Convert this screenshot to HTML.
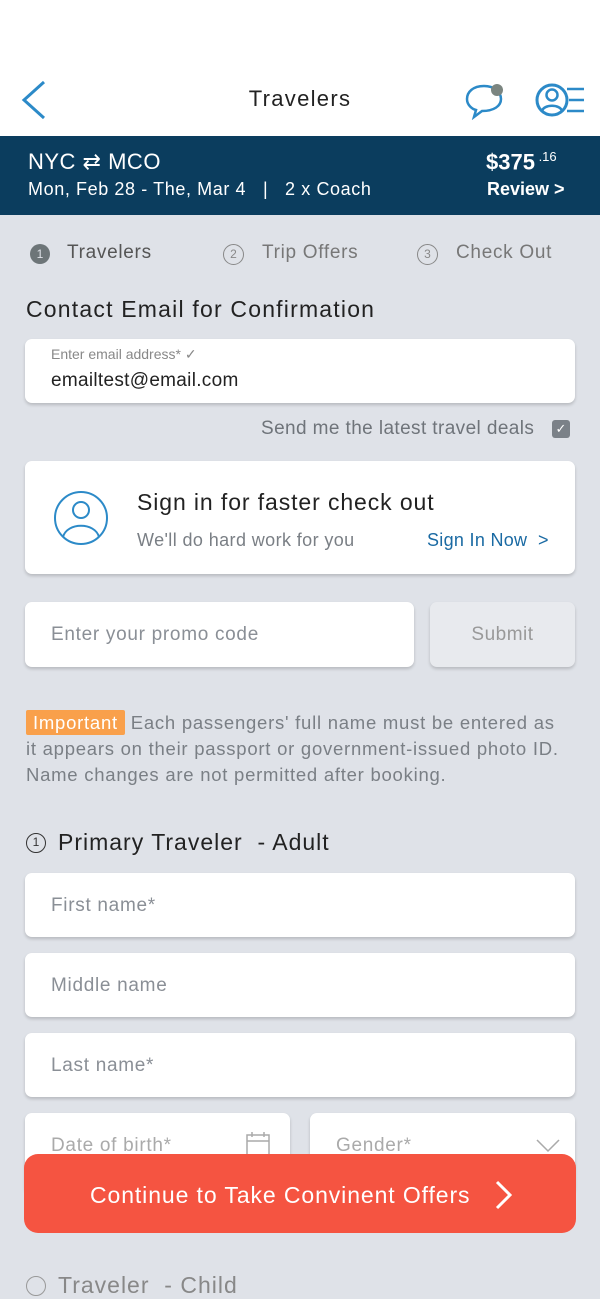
<!DOCTYPE html>
<html><head><meta charset="utf-8"><style>
*{box-sizing:border-box;margin:0;padding:0}
body{width:600px;height:1298px;overflow:hidden;background:#dfe2e8;font-family:"Liberation Sans",sans-serif;position:relative}
.abs{position:absolute;white-space:nowrap}
.card{position:absolute;background:#fff;border-radius:7px;box-shadow:0 2px 3px rgba(0,0,0,.18)}
.ph{position:absolute;left:26px;font-size:19px;letter-spacing:0.7px;color:#8a8f96}
</style></head><body>
<div class="abs" style="left:0;top:0;width:600px;height:136px;background:#fff"></div>
<svg class="abs" style="left:20px;top:80px" width="28" height="40"><path d="M24 2 L4 20 L24 38" fill="none" stroke="#2c8ac8" stroke-width="3"/></svg>
<div class="abs" style="left:0;width:600px;top:86px;text-align:center;font-size:22px;letter-spacing:1.3px;color:#222">Travelers</div>
<svg class="abs" style="left:464px;top:80px" width="44" height="40"><path d="M20 6 C9 6 3 12 3 19 C3 25 8 29 12 30 L10 37 L18 31 C30 31 37 26 37 19 C37 12 30 6 20 6Z" fill="none" stroke="#2c8ac8" stroke-width="2.5"/><circle cx="33" cy="10" r="6" fill="#7b8580"/></svg>
<svg class="abs" style="left:534px;top:80px" width="52" height="40"><circle cx="18" cy="20" r="15" fill="none" stroke="#2c8ac8" stroke-width="3"/><circle cx="18" cy="15" r="5.5" fill="none" stroke="#2c8ac8" stroke-width="2.5"/><path d="M8 31 C10 24 26 24 28 31" fill="none" stroke="#2c8ac8" stroke-width="2.5"/><path d="M33 9H50M35 20H50M33 31H50" stroke="#2c8ac8" stroke-width="2.5"/></svg>
<div class="abs" style="left:0;top:136px;width:600px;height:79px;background:#0b3d5e;color:#fff">
<div class="abs" style="left:28px;top:13px;font-size:22px;letter-spacing:0.5px">NYC ⇄ MCO</div>
<div class="abs" style="left:28px;top:43px;font-size:18px;letter-spacing:0.6px">Mon, Feb 28 - The, Mar 4 &nbsp;&nbsp;| &nbsp;&nbsp;2 x Coach</div>
<div class="abs" style="left:486px;top:13px;font-size:22px;font-weight:bold">$375<sup style="font-size:13px;font-weight:normal"> .16</sup></div>
<div class="abs" style="left:487px;top:43px;font-size:18px;font-weight:bold">Review &gt;</div>
</div>
<div class="abs" style="left:30px;top:244px;width:20px;height:20px;border-radius:50%;background:#6d7578;color:#dfe2e8;font-size:12px;text-align:center;line-height:20px">1</div>
<div class="abs" style="left:67px;top:242px;font-size:19px;letter-spacing:0.7px;color:#555">Travelers</div>
<div class="abs" style="left:223px;top:244px;width:21px;height:21px;border-radius:50%;border:1.5px solid #888;color:#888;font-size:12px;text-align:center;line-height:18px">2</div>
<div class="abs" style="left:262px;top:242px;font-size:19px;letter-spacing:0.7px;color:#777">Trip Offers</div>
<div class="abs" style="left:417px;top:244px;width:21px;height:21px;border-radius:50%;border:1.5px solid #888;color:#888;font-size:12px;text-align:center;line-height:18px">3</div>
<div class="abs" style="left:456px;top:242px;font-size:19px;letter-spacing:0.7px;color:#777">Check Out</div>
<div class="abs" style="left:26px;top:296px;font-size:23px;letter-spacing:1.2px;color:#222">Contact Email for Confirmation</div>
<div class="card" style="left:25px;top:339px;width:550px;height:64px">
<div class="abs" style="left:26px;top:7px;font-size:14px;color:#888">Enter email address* ✓</div>
<div class="abs" style="left:26px;top:31px;font-size:19px;letter-spacing:0.3px;color:#222">emailtest@email.com</div></div>
<div class="abs" style="left:261px;top:418px;font-size:19px;letter-spacing:0.4px;color:#6f747a">Send me the latest travel deals</div>
<div class="abs" style="left:552px;top:420px;width:18px;height:18px;border-radius:3px;background:#7b8188;color:#fff;font-size:13px;text-align:center;line-height:18px">✓</div>
<div class="card" style="left:25px;top:461px;width:550px;height:113px">
<svg class="abs" style="left:26px;top:27px" width="60" height="60"><circle cx="30" cy="30" r="26" fill="none" stroke="#2c8ac8" stroke-width="2"/><circle cx="30" cy="22" r="8" fill="none" stroke="#2c8ac8" stroke-width="2"/><path d="M12 49 C16 34 44 34 48 49" fill="none" stroke="#2c8ac8" stroke-width="2"/></svg>
<div class="abs" style="left:112px;top:28px;font-size:23px;letter-spacing:0.9px;color:#222">Sign in for faster check out</div>
<div class="abs" style="left:112px;top:69px;font-size:18px;letter-spacing:0.4px;color:#7a7f85">We'll do hard work for you</div>
<div class="abs" style="left:402px;top:69px;font-size:18px;letter-spacing:0.3px;color:#1a6aa3">Sign In Now &nbsp;&gt;</div></div>
<div class="card" style="left:25px;top:602px;width:389px;height:65px"><div class="ph" style="top:22px">Enter your promo code</div></div>
<div class="card" style="left:430px;top:602px;width:145px;height:65px;background:#e8eaee"><div class="abs" style="left:0;width:145px;text-align:center;top:22px;font-size:19px;letter-spacing:0.5px;color:#999">Submit</div></div>
<div class="abs" style="left:26px;top:710px;font-size:18.5px;letter-spacing:0.75px;line-height:26px;color:#7a7f85"><span style="background:#f9a04b;color:#fff;padding:2px 7px;border-radius:2px">Important</span> Each passengers' full name must be entered as<br>it appears on their passport or government-issued photo ID.<br>Name changes are not permitted after booking.</div>
<div class="abs" style="left:26px;top:833px;width:20px;height:20px;border-radius:50%;border:1.5px solid #333;font-size:12px;text-align:center;line-height:17px;color:#333">1</div>
<div class="abs" style="left:58px;top:829px;font-size:23px;letter-spacing:1px;color:#222">Primary Traveler &nbsp;- Adult</div>
<div class="card" style="left:25px;top:873px;width:550px;height:64px"><div class="ph" style="top:22px">First name*</div></div>
<div class="card" style="left:25px;top:953px;width:550px;height:64px"><div class="ph" style="top:22px">Middle name</div></div>
<div class="card" style="left:25px;top:1033px;width:550px;height:64px"><div class="ph" style="top:22px">Last name*</div></div>
<div class="card" style="left:25px;top:1113px;width:265px;height:80px"><div class="ph" style="top:22px;color:#aaa">Date of birth*</div>
<svg class="abs" style="left:220px;top:18px" width="26" height="26"><rect x="2" y="4" width="22" height="20" fill="none" stroke="#aaa" stroke-width="1.5"/><path d="M2 10H24M7 1V6M19 1V6" stroke="#aaa" stroke-width="1.5"/></svg></div>
<div class="card" style="left:310px;top:1113px;width:265px;height:80px"><div class="ph" style="top:22px;color:#aaa">Gender*</div>
<svg class="abs" style="left:226px;top:26px" width="24" height="14"><path d="M1 1L12 12L23 1" fill="none" stroke="#aaa" stroke-width="1.5"/></svg></div>
<div class="abs" style="left:24px;top:1154px;width:552px;height:79px;border-radius:14px;background:#f55441;color:#fff;font-size:23px;letter-spacing:0.9px">
<div class="abs" style="left:66px;top:28px">Continue to Take Convinent Offers</div>
<svg class="abs" style="left:470px;top:26px" width="20" height="30"><path d="M3 2L16 15L3 28" fill="none" stroke="#fff" stroke-width="3"/></svg></div>
<div class="abs" style="left:26px;top:1276px;width:20px;height:20px;border-radius:50%;border:1.5px solid #999"></div>
<div class="abs" style="left:58px;top:1272px;font-size:23px;letter-spacing:1px;color:#888">Traveler &nbsp;- Child</div>
</body></html>
